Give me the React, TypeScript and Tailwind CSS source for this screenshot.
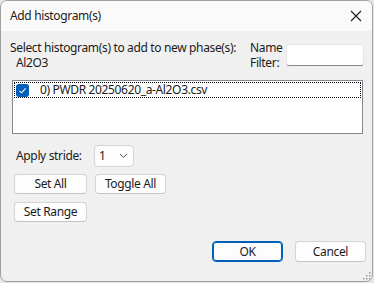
const font = "font-['Segoe_UI','Noto_Sans','Open_Sans',sans-serif] tracking-[-0.35px]";

function Btn({ label, className = "" }: { label: string; className?: string }) {
  return (
    <div
      className={`h-[20px] flex items-center justify-center bg-[#fdfdfd] border border-[#d3d3d3] border-b-[#c4c4c4] rounded-[4px] text-[12px] text-[#1b1b1b] ${className}`}
    >
      {label}
    </div>
  );
}

export default function App() {
  return (
    <div className={`w-[374px] h-[283px] bg-[#e6e6e6] ${font}`}>
      <div className="relative w-[373px] h-[282px] rounded-[7px] border border-[#a0a0a0] bg-[#f0f0f0] flex flex-col overflow-hidden">
        {/* title bar */}
        <div className="h-[30px] shrink-0 bg-[#fafafa] flex items-center justify-between pl-[9px] pr-[8px]">
          <span className="text-[12px] text-[#1b1b1b]">Add histogram(s)</span>
          <svg width="12" height="12" viewBox="0 0 12 12" className="mr-[2px]">
            <path d="M1 1L11 11M11 1L1 11" stroke="#1b1b1b" strokeWidth="1.1" />
          </svg>
        </div>

        {/* header row */}
        <div className="flex mt-[9px] text-[12px] text-[#1b1b1b] leading-[15px] whitespace-nowrap">
          <div className="ml-[9px] w-[240px]">
            <div>Select histogram(s) to add to new phase(s):</div>
            <div className="pl-[6px]">Al2O3</div>
          </div>
          <div className="w-[36px]">
            <div>Name</div>
            <div>Filter:</div>
          </div>
          <div className="mt-[4px] w-[78px] h-[22px] bg-white border border-[#e5e5e5] border-b-[#868686] rounded-[3px]" />
        </div>

        {/* list box */}
        <div className="ml-[11px] mt-[10px] w-[351px] h-[54px] bg-white border border-[#828790]">
          <div className="mx-[1px] mt-[1px] h-[16px] border border-dotted border-black flex items-center">
            <div className="ml-[1px] w-[13px] h-[13px] rounded-[3px] bg-[#005fb8] flex items-center justify-center">
              <svg width="9" height="9" viewBox="0 0 9 9">
                <path d="M1.5 4.8L3.6 6.8L7.5 2.4" stroke="white" strokeWidth="1.1" fill="none" />
              </svg>
            </div>
            <span className="ml-[11px] text-[12px] text-[#1b1b1b] whitespace-nowrap">0) PWDR 20250620_a-Al2O3.csv</span>
          </div>
        </div>

        {/* stride */}
        <div className="flex items-center mt-[11px] text-[12px] text-[#1b1b1b]">
          <span className="ml-[15px] w-[78px] whitespace-nowrap">Apply stride:</span>
          <div className="w-[40px] h-[22px] bg-[#fdfdfd] border border-[#d3d3d3] rounded-[4px] flex items-center justify-between pl-[4px] pr-[5px]">
            <span>1</span>
            <svg width="9" height="6" viewBox="0 0 9 6">
              <path d="M1 1L4.5 4.5L8 1" stroke="#555" strokeWidth="1" fill="none" />
            </svg>
          </div>
        </div>

        <div className="flex mt-[7px] ml-[13px] gap-[8px]">
          <Btn label="Set All" className="w-[73px]" />
          <Btn label="Toggle All" className="w-[71px]" />
        </div>
        <div className="flex mt-[8px] ml-[13px]">
          <Btn label="Set Range" className="w-[73px]" />
        </div>

        <div className="flex justify-end mt-[19px] mr-[6px] gap-[12px]">
          <Btn label="OK" className="w-[71px] h-[21px] !border-[#005fb8] shadow-[inset_0_0_0_1px_#005fb8]" />
          <Btn label="Cancel" className="w-[71px] h-[21px]" />
        </div>

        {/* resize grip */}
        <svg width="10" height="10" viewBox="0 0 10 10" className="absolute right-[1px] bottom-[1px]">
          {[
            [8, 2],
            [5, 5],
            [8, 5],
            [2, 8],
            [5, 8],
            [8, 8],
          ].map(([x, y], i) => (
            <rect key={i} x={x} y={y} width="1.5" height="1.5" fill="#9a9a9a" />
          ))}
        </svg>
      </div>
    </div>
  );
}
